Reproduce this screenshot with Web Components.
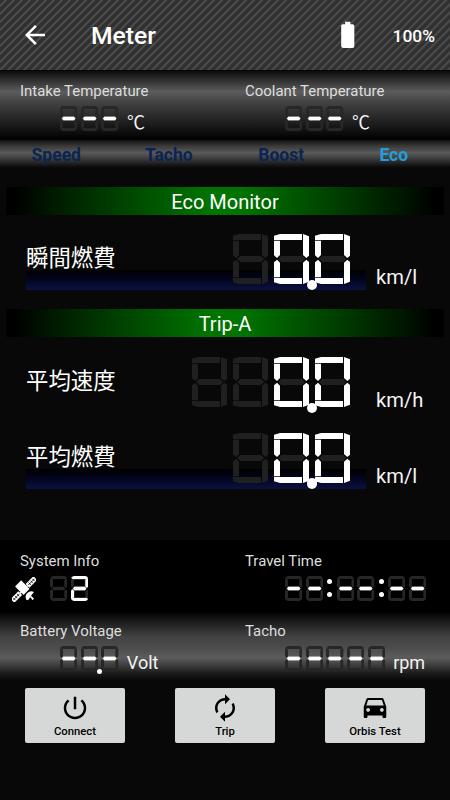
<!DOCTYPE html>
<html lang="ja">
<head>
<meta charset="utf-8">
<title>Meter</title>
<style>
  html, body {
    margin: 0;
    background: #080808;
  }
  body {
    width: 450px;
    height: 800px;
    overflow: hidden;
    font-family: Roboto, "Noto Sans CJK JP", sans-serif;
    color: #fff;
  }
</style>
</head>
<body>
<meter-app></meter-app>
<script>
const ICONS = {
  back: "M20 11H7.83l5.59-5.59L12 4l-8 8 8 8 1.41-1.41L7.83 13H20v-2z",
  battery: "M15.67 4H14V2h-4v2H8.33C7.6 4 7 4.6 7 5.33v15.33C7 21.4 7.6 22 8.33 22h7.33c.74 0 1.34-.6 1.34-1.33V5.33C17 4.6 16.4 4 15.67 4z",
  power: "M13 3h-2v10h2V3zm4.83 2.17l-1.42 1.42C17.99 7.86 19 9.81 19 12c0 3.87-3.13 7-7 7s-7-3.13-7-7c0-2.19 1.01-4.14 2.58-5.42L6.17 5.17C4.23 6.82 3 9.26 3 12c0 4.97 4.03 9 9 9s9-4.03 9-9c0-2.74-1.23-5.18-3.17-6.83z",
  renew: "M12 6v3l4-4-4-4v3c-4.42 0-8 3.58-8 8 0 1.57.46 3.03 1.24 4.26L6.7 14.8c-.45-.83-.7-1.79-.7-2.8 0-3.31 2.69-6 6-6zm6.76 1.74L17.3 9.2c.44.84.7 1.79.7 2.8 0 3.31-2.69 6-6 6v-3l-4 4 4 4v-3c4.42 0 8-3.58 8-8 0-1.57-.46-3.03-1.24-4.26z",
  car: "M18.92 5.01C18.72 4.42 18.16 4 17.5 4h-11c-.66 0-1.21.42-1.42 1.01L3 11v8c0 .55.45 1 1 1h1c.55 0 1-.45 1-1v-1h12v1c0 .55.45 1 1 1h1c.55 0 1-.45 1-1v-8l-2.08-5.99zM6.5 15c-.83 0-1.5-.67-1.5-1.5S5.67 12 6.5 12s1.5.67 1.5 1.5S7.33 15 6.5 15zm11 0c-.83 0-1.5-.67-1.5-1.5s.67-1.5 1.5-1.5 1.5.67 1.5 1.5-.67 1.5-1.5 1.5zM5 10l1.5-4.5h11L19 10H5z"
};

// segments a-g, one table per digit size
const SEGMENTS = {
  large: {
    a: "0,5 18,0 84,0 84,18 0,18",
    b: "87,0 106,7 106,64 97,72 87,63",
    c: "97,77 106,85 106,143 87,150 87,86",
    d: "0,132 84,132 84,150 18,150 0,145",
    e: "9,77 18,86 18,130 0,130 0,85",
    f: "0,20 18,20 18,63 9,72 0,64",
    g: "12,75 22,66 84,66 94,75 84,84 22,84"
  },
  small: {
    a: "1,5 8,0 44,0 51,5 47,9 5,9",
    b: "52,7 52,31 48,35 43,31 43,11 48,8",
    c: "52,44 52,68 48,68 43,64 43,44 48,40",
    d: "5,66 47,66 51,70 44,75 8,75 1,70",
    e: "0,44 4,40 9,44 9,64 4,68 0,68",
    f: "0,7 4,8 9,11 9,31 4,35 0,31",
    g: "6,37.5 10,32.5 42,32.5 46,37.5 42,42.5 10,42.5"
  }
};
const GLYPHS = { "0": "abcdef", "2": "abged", "-": "g", " ": "" };

function define(name, template) {
  customElements.define(name, class extends HTMLElement {
    constructor() {
      super();
      this.shadow = this.attachShadow({ mode: "open" });
    }
    connectedCallback() {
      this.shadow.innerHTML = template(this);
    }
  });
}

define("md-icon", (el) => {
  const size = el.getAttribute("size") || 30;
  return `
    <style>
      :host { display: block; flex: none; }
      svg { display: block; }
    </style>
    <svg width="${size}" height="${size}" viewBox="0 0 24 24" fill="currentColor">
      <path d="${ICONS[el.getAttribute("name")]}"/>
    </svg>`;
});

define("seg-display", (el) => {
  const size = el.getAttribute("size") || "small";
  const big = size === "large";
  const parts = [...el.getAttribute("value")].map((ch) => {
    if (ch === ".") return `<i class="dot"></i>`;
    if (ch === ":") return `<span class="colon"><i></i><i></i></span>`;
    const on = GLYPHS[ch];
    const segs = Object.entries(SEGMENTS[size])
      .sort(([p], [q]) => on.includes(p) - on.includes(q))
      .map(([key, points]) => `<polygon class="${on.includes(key) ? "on" : ""}" points="${points}"/>`);
    return `<svg viewBox="0 0 ${big ? "106 150" : "52 75"}">${segs.join("")}</svg>`;
  });
  return `
    <style>
      :host {
        display: flex;
        gap: ${big ? 5.7 : 3.3}px;
        height: ${big ? 50 : 25}px;
      }
      svg {
        display: block;
        width: ${big ? 35.33 : 17.33}px;
        height: ${big ? 50 : 25}px;
        flex: none;
      }
      polygon { fill: ${big ? "#202020" : "#272727"}; }
      polygon.on {
        fill: #fff;
        ${big ? "" : "stroke: #fff; stroke-width: 1; stroke-linejoin: round;"}
      }
      i { border-radius: 50%; background: #fff; }
      .dot {
        position: relative;
        align-self: flex-end;
        width: ${big ? 10.4 : 5.2}px;
        height: ${big ? 10.4 : 5.2}px;
        margin: 0 ${big ? -8.05 : -4.25}px;
        bottom: ${big ? -6.2 : -3.2}px;
        z-index: 1;
      }
      .colon {
        display: flex;
        flex-direction: column;
        justify-content: center;
        align-items: center;
        gap: 8px;
        width: 7px;
      }
      .colon i { width: 5.4px; height: 5.4px; }
    </style>
    ${parts.join("")}`;
});

define("app-bar", () => `
    <style>
      :host {
        box-sizing: border-box;
        display: flex;
        align-items: center;
        height: 70px;
        padding: 0 15px 0 20px;
        background: repeating-linear-gradient(135deg, #303030 0 2.9px, #4a4a4a 3.5px 5px, #303030 5.66px);
      }
      h1 {
        flex: 1;
        margin: 1px 0 0 41px;
        font-size: 24.7px;
        font-weight: 500;
      }
      .level {
        margin: 2px 0 0 29px;
        font-size: 17.4px;
        font-weight: 500;
      }
    </style>
    <md-icon name="back"></md-icon>
    <h1><slot></slot></h1>
    <md-icon name="battery" size="31.5"></md-icon>
    <div class="level"><slot name="level"></slot></div>`);

define("info-panel", (el) => `
    <style>
      :host {
        display: grid;
        grid-template-columns: 1fr 1fr;
        height: 70px;
        background: ${{
          top: "linear-gradient(#000, #0d0d0d 2%, #5c5c5c 31%, #444 45%, #070707 94%, #000)",
          flat: "#000",
          bottom: "linear-gradient(#000 2%, #424242 38%, #4d4d4d 55%, #5c5c5c 68%, #404040 78%, #1a1a1a 91%, #0a0a0a)"
        }[el.getAttribute("tone")]};
      }
    </style>
    <slot></slot>`);

define("info-readout", (el) => `
    <style>
      :host {
        display: flex;
        flex-direction: column;
        padding: 11px 0 0 20px;
      }
      .label {
        height: 24.5px;
        line-height: 20px;
        font-size: 14.95px;
        color: #dedede;
      }
      .row {
        display: flex;
        height: 25px;
        padding-left: ${el.getAttribute("indent") || 40}px;
      }
      .unit {
        margin: 6px 0 0 8.3px;
        line-height: 22px;
        font-size: 18px;
        color: #f2f2f2;
      }
      ::slotted(svg) {
        display: block;
        flex: none;
        margin: 1px 14px 0 -8px;
      }
    </style>
    <div class="label">${el.getAttribute("label")}</div>
    <div class="row">
      <slot></slot>
      <seg-display value="${el.getAttribute("value")}"></seg-display>
      <div class="unit">${el.getAttribute("unit") || ""}</div>
    </div>`);

define("mode-tabs", () => `
    <style>
      :host {
        display: grid;
        grid-template-columns: repeat(4, 1fr);
        height: 28px;
        line-height: 30px;
        text-align: center;
        font-size: 17.5px;
        font-weight: 700;
        color: #082454;
        background: linear-gradient(#111, #3a3a3a 22%, #5a5a5a 46%, #3a3a3a 68%, #0c0c0c 96%, #080808);
      }
      ::slotted([selected]) { color: #209fdd; }
    </style>
    <slot></slot>`);

define("section-title", () => `
    <style>
      :host {
        display: block;
        height: 27.5px;
        margin: 0 6px;
        line-height: 30px;
        text-align: center;
        font-size: 20px;
        background: linear-gradient(90deg, #000 2%, #001500 9%, #003f00 25%, #007300 46%, #007300 54%, #003f00 75%, #001500 91%, #000 98%);
      }
    </style>
    <slot></slot>`);

define("eco-gauge", (el) => `
    <style>
      :host {
        display: grid;
        grid-template-columns: 340px 1fr;
        column-gap: 10px;
        height: 56.5px;
        margin-left: 26px;
      }
      .main {
        display: flex;
        justify-content: space-between;
        padding-right: 15.7px;
        ${el.hasAttribute("bar") ? "background: linear-gradient(#000, #02041a 40%, #0b1242) bottom / 100% 20.5px no-repeat;" : ""}
      }
      .name {
        line-height: 48px;
        font-size: 22.4px;
      }
      .unit {
        align-self: end;
        margin-bottom: 0.5px;
        line-height: 26px;
        font-size: 20.2px;
        color: #f4f4f4;
      }
    </style>
    <div class="main">
      <div class="name"><slot></slot></div>
      <seg-display size="large" value="${el.getAttribute("value")}"></seg-display>
    </div>
    <div class="unit">${el.getAttribute("unit")}</div>`);

define("action-button", (el) => `
    <style>
      :host {
        display: flex;
        flex-direction: column;
        align-items: center;
        width: 100px;
        height: 55px;
        padding-top: 5px;
        box-sizing: border-box;
        border-radius: 2px;
        background: #d6d8d7;
        color: #000;
        font-size: 11.3px;
        font-weight: 500;
        line-height: 18px;
      }
    </style>
    <md-icon name="${el.getAttribute("icon")}"></md-icon>
    <slot></slot>`);

define("meter-app", () => `
    <style>
      :host { display: block; }
      main {
        display: flex;
        flex-direction: column;
        box-sizing: border-box;
        height: 372px;
        padding-top: 19px;
      }
      .first { margin-top: 19.3px; margin-bottom: 19.1px; }
      .speed { margin-top: 19.9px; }
      .trip { margin-top: 19.3px; }
      footer {
        display: flex;
        justify-content: space-between;
        padding: 8px 25px;
      }
    </style>
    <app-bar>Meter<span slot="level">100%</span></app-bar>
    <info-panel tone="top">
      <info-readout label="Intake Temperature" value="---" unit="℃"></info-readout>
      <info-readout label="Coolant Temperature" value="---" unit="℃"></info-readout>
    </info-panel>
    <mode-tabs>
      <span>Speed</span>
      <span>Tacho</span>
      <span>Boost</span>
      <span selected>Eco</span>
    </mode-tabs>
    <main>
      <section-title>Eco Monitor</section-title>
      <eco-gauge class="first" bar value=" 0.0" unit="km/l">瞬間燃費</eco-gauge>
      <section-title>Trip-A</section-title>
      <eco-gauge class="speed" value="  0.0" unit="km/h">平均速度</eco-gauge>
      <eco-gauge class="trip" bar value=" 0.0" unit="km/l">平均燃費</eco-gauge>
    </main>
    <info-panel tone="flat">
      <info-readout label="System Info" value=" 2" indent="0">
        <svg width="24" height="25" viewBox="0 0 72 75">
          <g fill="#fff" transform="rotate(-45 36 37)">
            <rect x="-13" y="29" width="33" height="16"/>
            <rect x="51" y="29" width="33" height="16"/>
            <rect x="18" y="35" width="36" height="4"/>
            <rect x="23" y="12" width="26" height="36" rx="2"/>
            <path d="M-10 37h27M-5 32v10M3 32v10M11 32v10M54 37h27M60 32v10M68 32v10M76 32v10" stroke="#000" stroke-width="2.2" fill="none"/>
          </g>
          <path fill="#fff" d="M43 68A17 17 0 0 1 66 45L57 56L64 63L62 69L55 61L48 70z"/>
          <circle cx="62" cy="65" r="3" fill="#fff"/>
        </svg>
      </info-readout>
      <info-readout label="Travel Time" value="--:--:--"></info-readout>
    </info-panel>
    <info-panel tone="bottom">
      <info-readout label="Battery Voltage" value="--.-" unit="Volt"></info-readout>
      <info-readout label="Tacho" value="-----" unit="rpm"></info-readout>
    </info-panel>
    <footer>
      <action-button icon="power">Connect</action-button>
      <action-button icon="renew">Trip</action-button>
      <action-button icon="car">Orbis Test</action-button>
    </footer>`);
</script>
</body>
</html>
